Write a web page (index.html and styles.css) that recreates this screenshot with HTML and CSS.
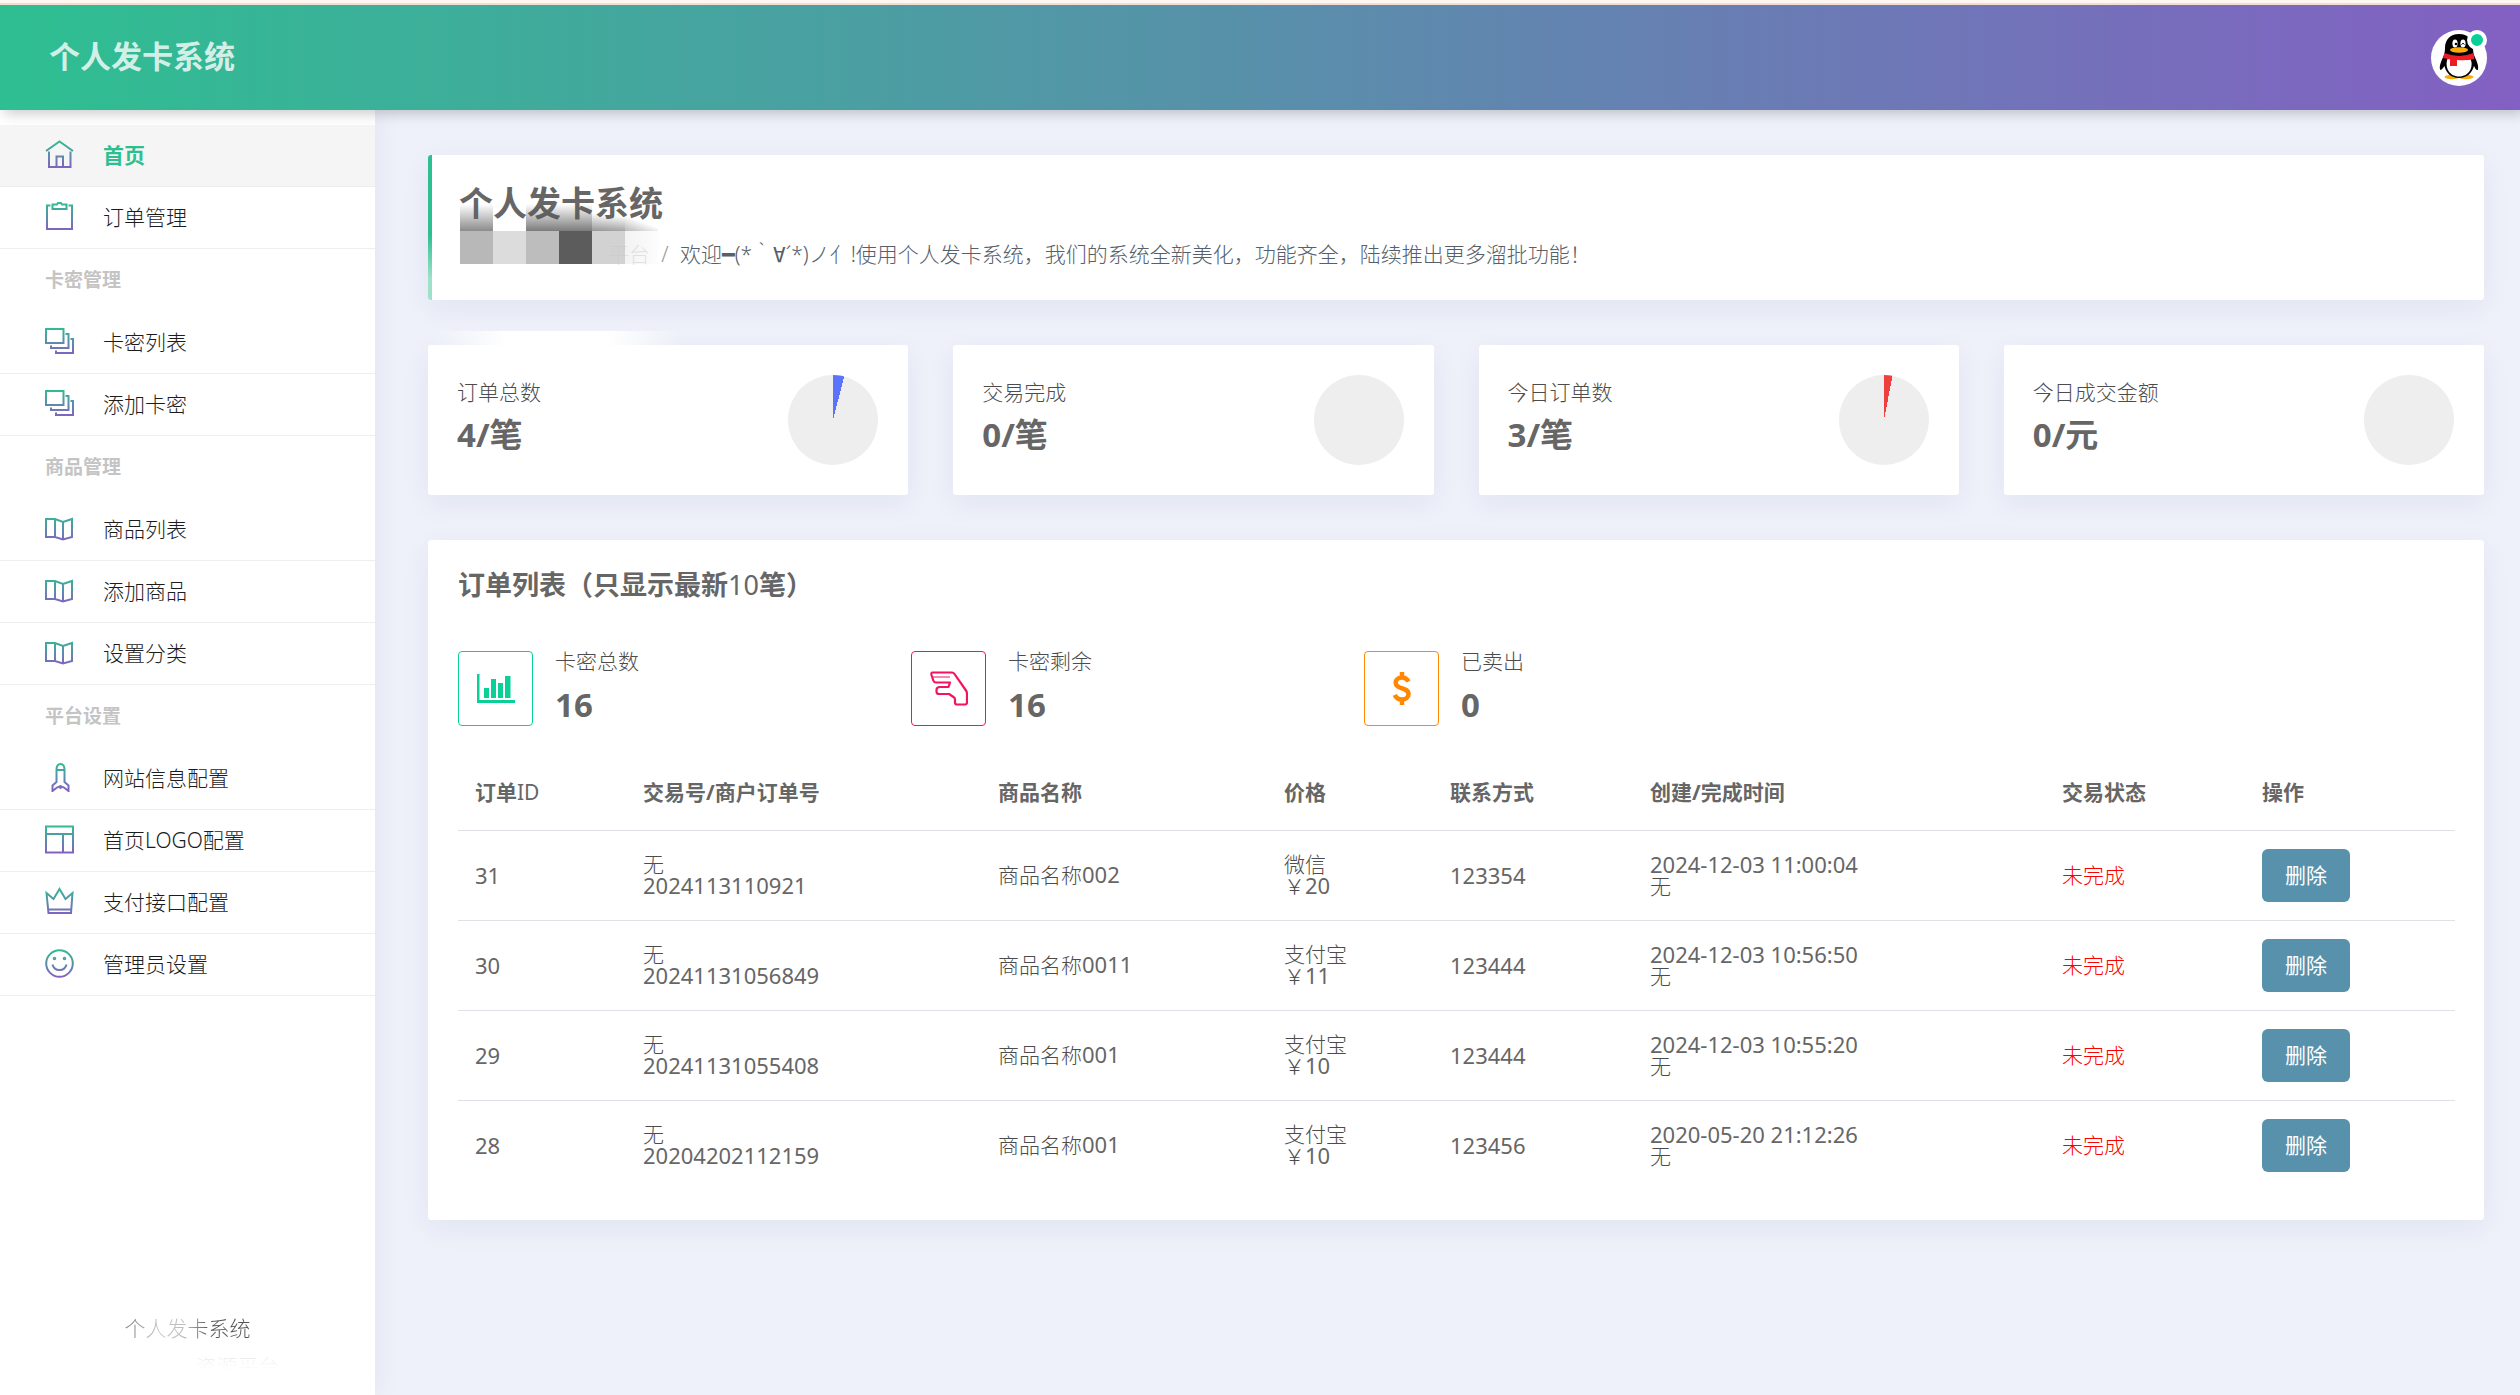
FILE: index.html
```html
<!DOCTYPE html>
<html lang="zh-CN">
<head>
<meta charset="utf-8">
<title>个人发卡系统</title>
<link rel="stylesheet" href="styles.css">
</head>
<body>
<svg class="defs" aria-hidden="true">
  <defs>
    <linearGradient id="brand" gradientUnits="userSpaceOnUse" x1="0" y1="0" x2="0" y2="28">
      <stop offset="0" stop-color="#2ebf91"/><stop offset="1" stop-color="#8360c3"/>
    </linearGradient>
    <symbol id="i-home" viewBox="0 0 29 29"><path d="M1 11 14.500 1.500 28 11M4 11.500V27H25.500V11.500M11.500 27V16.500H18V27"/></symbol>
    <symbol id="i-clip" viewBox="0 0 29 29"><path d="M5.500 3.500H2V27H27V3.500H23.500M7.500 2.500H12L13 1H16L17 2.500H21.500V7H7.500Z"/></symbol>
    <symbol id="i-layers" viewBox="0 0 29 29"><path d="M1 2H18.500V16H1ZM20.500 7H23.500V21H6V18.500M25.500 12H28V26H11V23.500"/></symbol>
    <symbol id="i-map" viewBox="0 0 29 29"><path d="M1 5H10L18 8 27 5V23L18 25.500 10 23H1ZM10 5V23M18 8V25.500"/></symbol>
    <symbol id="i-rocket" viewBox="0 0 29 29"><path d="M11.500 7C11.500 3 12.500 1 15.500 1S19.500 3 19.500 7V19L23.500 22.500V28L19 24.500 15.500 23 12 24.500 7.500 28V22.500L11.500 19ZM11.500 7H19.500M15.500 23V26"/></symbol>
    <symbol id="i-layout" viewBox="0 0 29 29"><path d="M1 1.500H28V27.500H1ZM1 9H28M18 9V27.500"/></symbol>
    <symbol id="i-crown" viewBox="0 0 29 29"><path d="M1.500 6 8.500 12 14.500 2 20.500 12 27.500 6 26 26H3.500ZM3 22.500H26"/></symbol>
    <symbol id="i-smile" viewBox="0 0 29 29"><circle cx="14.500" cy="14.500" r="13.300"/><path d="M7.500 15.500A7.200 7.200 0 0 0 21.500 15.500"/><circle cx="9.500" cy="9.500" r=".8"/><circle cx="19.500" cy="9.500" r=".8"/></symbol>
  </defs>
</svg>

<header class="topbar">
  <a class="logo" href="#">个人发卡系统</a>
  <button class="avatar" type="button" aria-label="管理员">
    <svg viewBox="0 0 56 56" aria-hidden="true">
      <circle cx="28" cy="28" r="28" fill="#fff"/>
      <ellipse cx="21" cy="47" rx="7.500" ry="2.200" fill="#faab07"/>
      <ellipse cx="35" cy="47" rx="7.500" ry="2.200" fill="#faab07"/>
      <path d="M28 4C19 4 14 10 14 18C14 21 13.500 23 13 25C11 30 8 35 9 39.500C10 41 12 38 13.500 36C15 43 20 48 28 48S41 43 43 36C44 38 46 41.500 47 39.500C48 35 45 30 43 25C42.500 23 42 21 42 18C42 10 37 4 28 4Z" fill="#000"/>
      <path d="M16.500 29H39.500C43 37 38 46.500 28 46.500S13.500 37 16.500 29Z" fill="#fff"/>
      <path d="M13.500 23Q28 29 42.500 23L43.500 29Q35 31 26 30V36H19V29.500L12 28Z" fill="#eb1c26"/>
      <ellipse cx="24" cy="13.500" rx="2.600" ry="4" fill="#fff"/><ellipse cx="32" cy="13.500" rx="2.600" ry="4" fill="#fff"/>
      <circle cx="25" cy="14" r="1.300"/><path d="M30.500 14.500Q32 12 33.500 14.500" fill="none" stroke="#000"/>
      <ellipse cx="28" cy="20" rx="9" ry="2.700" fill="#faab07"/>
    </svg>
    <span class="status"></span>
  </button>
</header>

<div class="shell">
  <aside class="sidebar">
    <nav class="menu">
      <a class="item active" href="#"><svg class="icon"><use href="#i-home"/></svg>首页</a>
      <a class="item" href="#"><svg class="icon"><use href="#i-clip"/></svg>订单管理</a>
      <h2 class="group">卡密管理</h2>
      <a class="item" href="#"><svg class="icon"><use href="#i-layers"/></svg>卡密列表</a>
      <a class="item" href="#"><svg class="icon"><use href="#i-layers"/></svg>添加卡密</a>
      <h2 class="group">商品管理</h2>
      <a class="item" href="#"><svg class="icon"><use href="#i-map"/></svg>商品列表</a>
      <a class="item" href="#"><svg class="icon"><use href="#i-map"/></svg>添加商品</a>
      <a class="item" href="#"><svg class="icon"><use href="#i-map"/></svg>设置分类</a>
      <h2 class="group">平台设置</h2>
      <a class="item" href="#"><svg class="icon"><use href="#i-rocket"/></svg>网站信息配置</a>
      <a class="item" href="#"><svg class="icon"><use href="#i-layout"/></svg>首页LOGO配置</a>
      <a class="item" href="#"><svg class="icon"><use href="#i-crown"/></svg>支付接口配置</a>
      <a class="item" href="#"><svg class="icon"><use href="#i-smile"/></svg>管理员设置</a>
    </nav>
    <footer class="side-foot">
      <p class="foot-name">个人发卡系统</p>
      <p class="foot-sub">资源平台</p>
    </footer>
  </aside>

  <main class="content">
    <section class="card banner">
      <h1 class="banner-title">个人发卡系统</h1>
      <p class="banner-text"><span class="crumb">平台</span><span class="slash">/</span><span>欢迎<span class="sym">━</span>(*｀<span class="sym">∀</span>´*)ノ亻!使用个人发卡系统，我们的系统全新美化，功能齐全，陆续推出更多溜批功能！</span></p>
      <div class="mosaic" aria-hidden="true">
        <i class="m1"></i><i></i><i class="m2"></i><i class="m2"></i><i class="m3"></i><i class="m4"></i>
        <i class="t1"></i><i class="t2"></i><i class="t3"></i><i class="t4"></i><i class="t5"></i><i class="t6"></i>
      </div>
    </section>

    <section class="stats">
      <article class="card stat smudge"><div><h3 class="label">订单总数</h3><p class="value">4/笔</p></div><div class="pie pie-blue"></div></article>
      <article class="card stat"><div><h3 class="label">交易完成</h3><p class="value">0/笔</p></div><div class="pie"></div></article>
      <article class="card stat"><div><h3 class="label">今日订单数</h3><p class="value">3/笔</p></div><div class="pie pie-red"></div></article>
      <article class="card stat"><div><h3 class="label">今日成交金额</h3><p class="value">0/元</p></div><div class="pie"></div></article>
    </section>

    <section class="card orders">
      <h2 class="orders-title">订单列表（只显示最新<span class="thin">10</span>笔）</h2>
      <div class="totals">
        <div class="total">
          <div class="box green"><svg width="38" height="29" viewBox="0 0 38 29"><path d="M0 0H2.500V26H38V29H0ZM7 14H12V24H7ZM14 5H19V24H14ZM21 9H26V24H21ZM28 2H33.500V24H28Z" fill="currentColor"/></svg></div>
          <div><p class="total-label">卡密总数</p><p class="total-value">16</p></div>
        </div>
        <div class="total">
          <div class="box pink"><svg width="38" height="35" viewBox="0 0 38 35" fill="none" stroke="currentColor" stroke-width="2.200" stroke-linejoin="round"><path d="M2.500 1.500H22Q23.500 1.500 24.500 3L36 19.500Q37 21 37 23V31.500Q37 33.500 35 33.500H27Q25 33.500 25 31.500V28.500Q25 27 23.500 26L19 23H9Q6.500 23 6.500 20.500V19Q6.500 16 10 16H18.500L20 11.500H6Q4 11.500 3.300 9.500L1.500 4Q1 1.500 2.500 1.500Z"/><path d="M3 6H20" stroke-width="1"/></svg></div>
          <div><p class="total-label">卡密剩余</p><p class="total-value">16</p></div>
        </div>
        <div class="total">
          <div class="box orange"><svg width="18" height="33" viewBox="0 0 18 33" fill="none" stroke="currentColor" stroke-width="4.500"><path d="M15.500 9.500C14 6.800 11.700 5.500 9 5.500C5.400 5.500 2.700 7.700 2.700 10.700C2.700 18 15.500 14.500 15.500 22.300C15.500 25.400 12.700 27.500 9 27.500C5.700 27.500 3.200 26 1.800 23M9 0V5.500M9 27.500V33"/></svg></div>
          <div><p class="total-label">已卖出</p><p class="total-value">0</p></div>
        </div>
      </div>
      <table class="table">
        <colgroup><col class="c-id"><col class="c-no"><col class="c-name"><col class="c-price"><col class="c-contact"><col class="c-time"><col class="c-state"><col class="c-act"></colgroup>
        <thead>
          <tr><th>订单<span class="thin">ID</span></th><th>交易号/商户订单号</th><th>商品名称</th><th>价格</th><th>联系方式</th><th>创建/完成时间</th><th>交易状态</th><th>操作</th></tr>
        </thead>
        <tbody>
          <tr><td class="num">31</td><td>无<br><span class="num">2024113110921</span></td><td>商品名称<span class="num">002</span></td><td>微信<br>￥<span class="num">20</span></td><td class="num">123354</td><td><span class="num">2024-12-03 11:00:04</span><br>无</td><td class="pending">未完成</td><td><button class="btn" type="button">删除</button></td></tr>
          <tr><td class="num">30</td><td>无<br><span class="num">20241131056849</span></td><td>商品名称<span class="num">0011</span></td><td>支付宝<br>￥<span class="num">11</span></td><td class="num">123444</td><td><span class="num">2024-12-03 10:56:50</span><br>无</td><td class="pending">未完成</td><td><button class="btn" type="button">删除</button></td></tr>
          <tr><td class="num">29</td><td>无<br><span class="num">20241131055408</span></td><td>商品名称<span class="num">001</span></td><td>支付宝<br>￥<span class="num">10</span></td><td class="num">123444</td><td><span class="num">2024-12-03 10:55:20</span><br>无</td><td class="pending">未完成</td><td><button class="btn" type="button">删除</button></td></tr>
          <tr><td class="num">28</td><td>无<br><span class="num">20204202112159</span></td><td>商品名称<span class="num">001</span></td><td>支付宝<br>￥<span class="num">10</span></td><td class="num">123456</td><td><span class="num">2020-05-20 21:12:26</span><br>无</td><td class="pending">未完成</td><td><button class="btn" type="button">删除</button></td></tr>
        </tbody>
      </table>
    </section>
  </main>
</div>
</body>
</html>
```
FILE: styles.css
```css
*, *::before, *::after { box-sizing: border-box; }
h1, h2, h3, p { margin: 0; }

body {
  margin: 0;
  min-height: 100vh;
  display: flex;
  flex-direction: column;
  border-top: 3px solid #fdf6f1;
  background: #eef1fa;
  color: #4c4c4c;
  font: 300 21px/30px "Noto Sans", "Noto Sans CJK SC", sans-serif;
}

.defs { position: absolute; width: 0; height: 0; }

/* Top bar */
.topbar {
  position: relative;
  z-index: 2;
  display: flex;
  align-items: center;
  justify-content: space-between;
  height: 107px;
  padding: 0 33px 0 49px;
  border-top: 2px solid #f3ddd0;
  background: linear-gradient(90deg, #2ebf91, #8360c3);
  box-shadow: 4px 4px 12px rgba(0, 0, 0, .2);
}
.logo { padding-bottom: 4px; color: rgba(255, 255, 255, .8); font-size: 31px; font-weight: 700; text-decoration: none; }
.avatar { position: relative; width: 56px; height: 56px; padding: 0; border: 0; border-radius: 50%; background: none; }
.avatar svg { display: block; }
.status {
  position: absolute;
  top: 0;
  right: 0;
  width: 20px;
  height: 20px;
  border: 4px solid #fff;
  border-radius: 50%;
  background: #0acf97;
}

/* Sidebar */
.shell { flex: 1; display: flex; }
.sidebar {
  flex: 0 0 375px;
  display: flex;
  flex-direction: column;
  padding-top: 15px;
  background: #fff;
  box-shadow: 0 0 30px rgba(0, 0, 60, .06);
}
.item {
  display: flex;
  align-items: center;
  gap: 29px;
  height: 62px;
  padding: 0 0 2px 45px;
  border-bottom: 1px solid #eee;
  color: #1c1c1c;
  text-decoration: none;
}
.active { background: #f5f5f5; color: #2ebf91; font-weight: 700; }
.icon { width: 29px; height: 29px; fill: none; stroke: url(#brand); stroke-width: 2; }
.group { height: 63px; padding-left: 45px; color: #c4c4c4; font-size: 19px; font-weight: 700; line-height: 63px; }
.side-foot { margin-top: auto; padding-bottom: 10px; text-align: center; line-height: 38px; }
.foot-name {
  background: linear-gradient(100deg, #888 36%, #ccc 43%, #bbb 49%, #555 56%);
  background-clip: text;
  color: transparent;
}
.foot-sub {
  padding-left: 100px;
  background: linear-gradient(#eee 30%, #fff 60%);
  background-clip: text;
  color: transparent;
}

/* Content */
.content {
  flex: 1;
  min-width: 0;
  display: flex;
  flex-direction: column;
  gap: 45px;
  padding: 45px 36px 45px 53px;
}
.card { border-radius: 3px; background: #fff; box-shadow: 0 8px 30px rgba(20, 30, 90, .06); }

.banner { position: relative; padding: 24px 31px 30px; }
.banner::before {
  content: "";
  position: absolute;
  inset: 0 auto 0 0;
  width: 4px;
  border-radius: 3px 0 0 3px;
  background: linear-gradient(#2ebf91 55%, #9fe0c9 85%);
}
.banner-title { color: #666; font-size: 34px; line-height: 48px; }
.banner-text { display: flex; margin-top: 12px; color: #56606a; }
.crumb { width: 191px; color: #ccc; text-align: right; }
.slash { width: 30px; color: #999; text-align: center; }
.sym { font-family: "DejaVu Sans Mono", monospace; }
.mosaic {
  position: absolute;
  top: 49px;
  left: 32px;
  display: grid;
  grid-template: 27px 33px / repeat(6, 33px);
}
.m1 { background: linear-gradient(transparent, rgba(90, 90, 90, .7)); }
.m2 { background: linear-gradient(transparent, rgba(80, 80, 80, .75)); }
.m3 { background: linear-gradient(185deg, transparent 40%, rgba(80, 80, 80, .6)); }
.m4 { background: linear-gradient(200deg, transparent 60%, rgba(80, 80, 80, .4)); }
.t1 { background: #b8b8b8; }
.t2 { background: #dcdcdc; }
.t3 { background: #bdbdbd; }
.t4 { background: #5c5c5c; }
.t5 { background: rgba(205, 205, 205, .9); }
.t6 { background: linear-gradient(90deg, rgba(235, 235, 235, .6), rgba(250, 250, 250, .5)); }

.stats { display: grid; grid-template-columns: repeat(4, 1fr); gap: 45px; }
.stat { position: relative; display: flex; justify-content: space-between; padding: 30px 30px 30px 29px; }
.smudge::before {
  content: "";
  position: absolute;
  top: -14px;
  left: 4px;
  width: 250px;
  height: 14px;
  background: linear-gradient(90deg, transparent, #fff 30%, #fff 70%, transparent);
}
.label { font-size: 21px; font-weight: 300; line-height: 34px; }
.value { color: #666; font-size: 33px; font-weight: 700; line-height: 52px; }
.pie { width: 90px; height: 90px; border-radius: 50%; background: #eee; }
.pie-blue { background: conic-gradient(#5b73fb 4%, #eee 0); }
.pie-red { background: conic-gradient(#ef4040 3%, #eee 0); }

/* Orders */
.orders { padding: 30px; }
.orders-title { color: #666; font-size: 27px; line-height: 30px; }
.thin { font-weight: 400; }
.totals { display: flex; gap: 45px; margin: 51px 0 30px; }
.total { flex: 0 1 408px; display: flex; gap: 22px; }
.box { display: grid; place-items: center; width: 75px; height: 75px; border: 1px solid; border-radius: 4px; }
.green { color: #0acf97; }
.pink { color: #f5125f; }
.orange { color: #ff8800; }
.total-label { line-height: 20px; }
.total-value { margin-top: 14px; color: #666; font-size: 33px; font-weight: 700; line-height: 40px; }

.table { width: 100%; table-layout: fixed; border-collapse: collapse; line-height: 21px; }
.table th { height: 74px; padding: 0 17px; color: #666; font-weight: 700; text-align: left; }
.table td { height: 90px; padding: 0 17px; border-top: 1px solid #dee2e6; }
.num { color: #666; font-size: 22px; font-weight: 400; }
.c-id { width: 168px; }
.c-no { width: 355px; }
.c-name { width: 286px; }
.c-price { width: 166px; }
.c-contact { width: 200px; }
.c-time { width: 412px; }
.c-state { width: 200px; }
.c-act { width: 210px; }
.table .pending { color: #f00; }
.btn {
  display: block;
  padding: 11px 23px 12px;
  border: 0;
  border-radius: 6px;
  background: #5891ab;
  color: #fff;
  font: inherit;
  font-weight: 400;
  line-height: 30px;
}
```
